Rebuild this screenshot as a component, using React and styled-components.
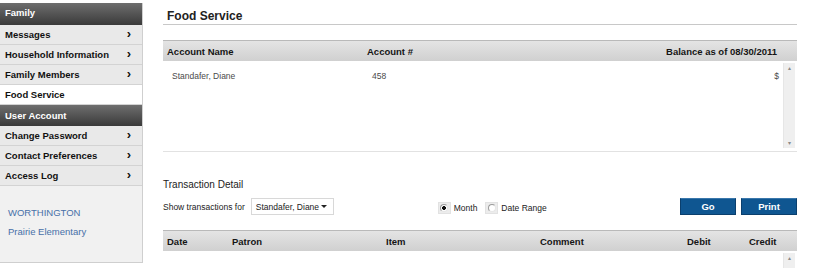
import React from "react";
import styled, { createGlobalStyle } from "styled-components";

const GlobalStyle = createGlobalStyle`
  body {
    margin: 0;
    background: #fff;
    font-family: "Liberation Sans", Arial, sans-serif;
  }
`;

const menu = [
  { type: "head", label: "Family", tall: true },
  { type: "link", label: "Messages" },
  { type: "link", label: "Household Information" },
  { type: "link", label: "Family Members" },
  { type: "active", label: "Food Service" },
  { type: "head", label: "User Account" },
  { type: "link", label: "Change Password" },
  { type: "link", label: "Contact Preferences" },
  { type: "link", label: "Access Log" },
];

/* column widths measured off the transaction grid */
const columns = [
  { label: "Date", width: 65 },
  { label: "Patron", width: 154 },
  { label: "Item", width: 154 },
  { label: "Comment", width: 147 },
  { label: "Debit", width: 62 },
  { label: "Credit" },
];

const App = () => {
  return (
    <Page>
      <GlobalStyle />
      <Sidebar>
        {menu.map((m) =>
          m.type === "head" ? (
            <MenuHead key={m.label} $tall={m.tall}>
              {m.label}
            </MenuHead>
          ) : (
            <MenuItem key={m.label} $active={m.type === "active"}>
              <span>{m.label}</span>
              {m.type === "link" && <Chevron>&rsaquo;</Chevron>}
            </MenuItem>
          )
        )}
        <SchoolBox>
          <SchoolLink>WORTHINGTON</SchoolLink>
          <SchoolLink>Prairie Elementary</SchoolLink>
        </SchoolBox>
      </Sidebar>

      <Main>
        <Title>Food Service</Title>

        <Grid>
          <HeadRow>
            <HeadCell style={{ width: 200 }}>Account Name</HeadCell>
            <HeadCell style={{ flex: 1 }}>Account #</HeadCell>
            <HeadCell>Balance as of 08/30/2011</HeadCell>
          </HeadRow>
          <ScrollBody $height={90}>
            <Rows>
              <DataRow>
                <DataCell style={{ width: 200 }}>Standafer, Diane</DataCell>
                <DataCell style={{ flex: 1 }}>458</DataCell>
                <DataCell>$</DataCell>
              </DataRow>
            </Rows>
            <ScrollBar>
              <Arrow>&#9652;</Arrow>
              <Arrow>&#9662;</Arrow>
            </ScrollBar>
          </ScrollBody>
        </Grid>

        <SubTitle>Transaction Detail</SubTitle>
        <FilterBar>
          <FilterLabel>Show transactions for</FilterLabel>
          <Select>
            <span>Standafer, Diane</span>
            <Caret />
          </Select>
          <RadioGroup>
            <RadioOption>
              <Radio $checked />
              Month
            </RadioOption>
            <RadioOption>
              <Radio />
              Date Range
            </RadioOption>
          </RadioGroup>
          <Buttons>
            <Button>Go</Button>
            <Button>Print</Button>
          </Buttons>
        </FilterBar>

        <HeadRow>
          {columns.map((c) => (
            <HeadCell
              key={c.label}
              style={c.width ? { width: c.width } : { flex: 1 }}
            >
              {c.label}
            </HeadCell>
          ))}
        </HeadRow>
        <ScrollBody $height={20}>
          <Rows />
          <ScrollBar>
            <Arrow>&#9652;</Arrow>
          </ScrollBar>
        </ScrollBody>
      </Main>
    </Page>
  );
};

export default App;

const Page = styled.div`
  display: flex;
  align-items: flex-start;
  width: 822px;
  height: 269px;
  overflow: hidden;
`;

const Sidebar = styled.div`
  width: 142px;
  flex-shrink: 0;
  margin-top: 3px;
  border-right: 1px solid #cfcfcf;
  border-bottom: 1px solid #cfcfcf;
  background: #f1f1f1;
`;

const MenuHead = styled.div`
  height: ${(p) => (p.$tall ? 22 : 21)}px;
  line-height: ${(p) => (p.$tall ? 20 : 21)}px;
  padding: 0 5px;
  background: linear-gradient(#6e6e6e, #3a3a3a);
  color: #fff;
  font-size: 9.5px;
  font-weight: bold;
`;

const MenuItem = styled.div`
  display: flex;
  justify-content: space-between;
  align-items: center;
  height: 19px;
  padding: 0 11px 0 5px;
  border-bottom: 1px solid #d3d3d3;
  background: ${(p) => (p.$active ? "#fff" : "#e9e9e9")};
  color: #111;
  font-size: 9.5px;
  font-weight: bold;
  white-space: nowrap;
`;

const Chevron = styled.span`
  font-size: 13px;
  font-weight: bold;
  line-height: 1;
  margin-top: -2px;
`;

const SchoolBox = styled.div`
  display: flex;
  flex-direction: column;
  gap: 8px;
  height: 76px;
  padding: 21px 8px 0;
  box-sizing: border-box;
`;

const SchoolLink = styled.div`
  color: #4770a8;
  font-size: 9.5px;
  line-height: 11px;
`;

const Main = styled.div`
  flex: 1;
  padding: 9px 25px 0 20px;
`;

const Title = styled.h1`
  margin: 0 0 15px;
  padding: 0 0 1px 4px;
  border-bottom: 1px solid #c8c8c8;
  color: #222;
  font-size: 12px;
  line-height: 14px;
  font-weight: bold;
`;

const Grid = styled.div`
  border-bottom: 1px solid #e2e2e2;
`;

const HeadRow = styled.div`
  display: flex;
  align-items: center;
  height: 20px;
  padding: 0 20px 0 4px;
  border-top: 1px solid #b9b9b9;
  background: linear-gradient(#e4e4e4, #d0d0d0);
`;

const HeadCell = styled.div`
  color: #151515;
  font-size: 9.5px;
  font-weight: bold;
  white-space: nowrap;
`;

const ScrollBody = styled.div`
  display: flex;
  height: ${(p) => p.$height}px;
  box-sizing: border-box;
  padding: 2px 2px 3px 0;
`;

const Rows = styled.div`
  flex: 1;
`;

const DataRow = styled.div`
  display: flex;
  padding: 8px 4px 0 9px;
`;

const DataCell = styled.div`
  color: #4a4a4a;
  font-size: 8.5px;
  line-height: 10px;
  white-space: nowrap;
`;

const ScrollBar = styled.div`
  width: 11px;
  display: flex;
  flex-direction: column;
  justify-content: space-between;
  align-items: center;
  background: #efefef;
  border-left: 1px solid #e6e6e6;
`;

const Arrow = styled.span`
  color: #8a8a8a;
  font-size: 6px;
  line-height: 10px;
`;

const SubTitle = styled.div`
  margin-top: 27px;
  color: #222;
  font-size: 10px;
  line-height: 12px;
`;

const FilterBar = styled.div`
  display: flex;
  align-items: center;
  height: 17px;
  margin: 7px 0 15px;
`;

const FilterLabel = styled.span`
  color: #222;
  font-size: 8.5px;
  margin-right: 6px;
`;

const Select = styled.div`
  display: flex;
  align-items: center;
  justify-content: space-between;
  width: 83px;
  height: 17px;
  box-sizing: border-box;
  padding: 0 6px 0 4px;
  border: 1px solid #d8d8d8;
  background: #fff;
  color: #222;
  font-size: 8.5px;
  white-space: nowrap;
`;

const Caret = styled.span`
  width: 0;
  height: 0;
  border-left: 3px solid transparent;
  border-right: 3px solid transparent;
  border-top: 3px solid #222;
`;

const RadioGroup = styled.div`
  display: flex;
  gap: 8px;
  margin-left: 104px;
`;

const RadioOption = styled.label`
  display: flex;
  align-items: center;
  gap: 3px;
  color: #222;
  font-size: 8.5px;
  margin-top: 3px;
`;

const Radio = styled.span`
  width: 13px;
  height: 12px;
  box-sizing: border-box;
  display: flex;
  align-items: center;
  justify-content: center;
  background: #ececec;
  border: 1px solid #e2e2e2;
  &::before {
    content: "";
    width: 8px;
    height: 8px;
    border-radius: 50%;
    box-sizing: border-box;
    border: 1px solid #9a9a9a;
    border-right-color: #e6e6e6;
    border-bottom-color: #e6e6e6;
    background: ${(p) =>
      p.$checked
        ? "radial-gradient(circle, #111 0 1.6px, #fff 2.2px)"
        : "#fff"};
  }
`;

const Buttons = styled.div`
  display: flex;
  gap: 5px;
  margin-left: auto;
`;

const Button = styled.button`
  width: 56px;
  height: 17px;
  padding: 0;
  border: 1px solid #0b3f6d;
  border-top-color: #3a77ab;
  background: #0f5691;
  color: #fff;
  font-family: "Liberation Sans", Arial, sans-serif;
  font-size: 9.5px;
  font-weight: bold;
`;
